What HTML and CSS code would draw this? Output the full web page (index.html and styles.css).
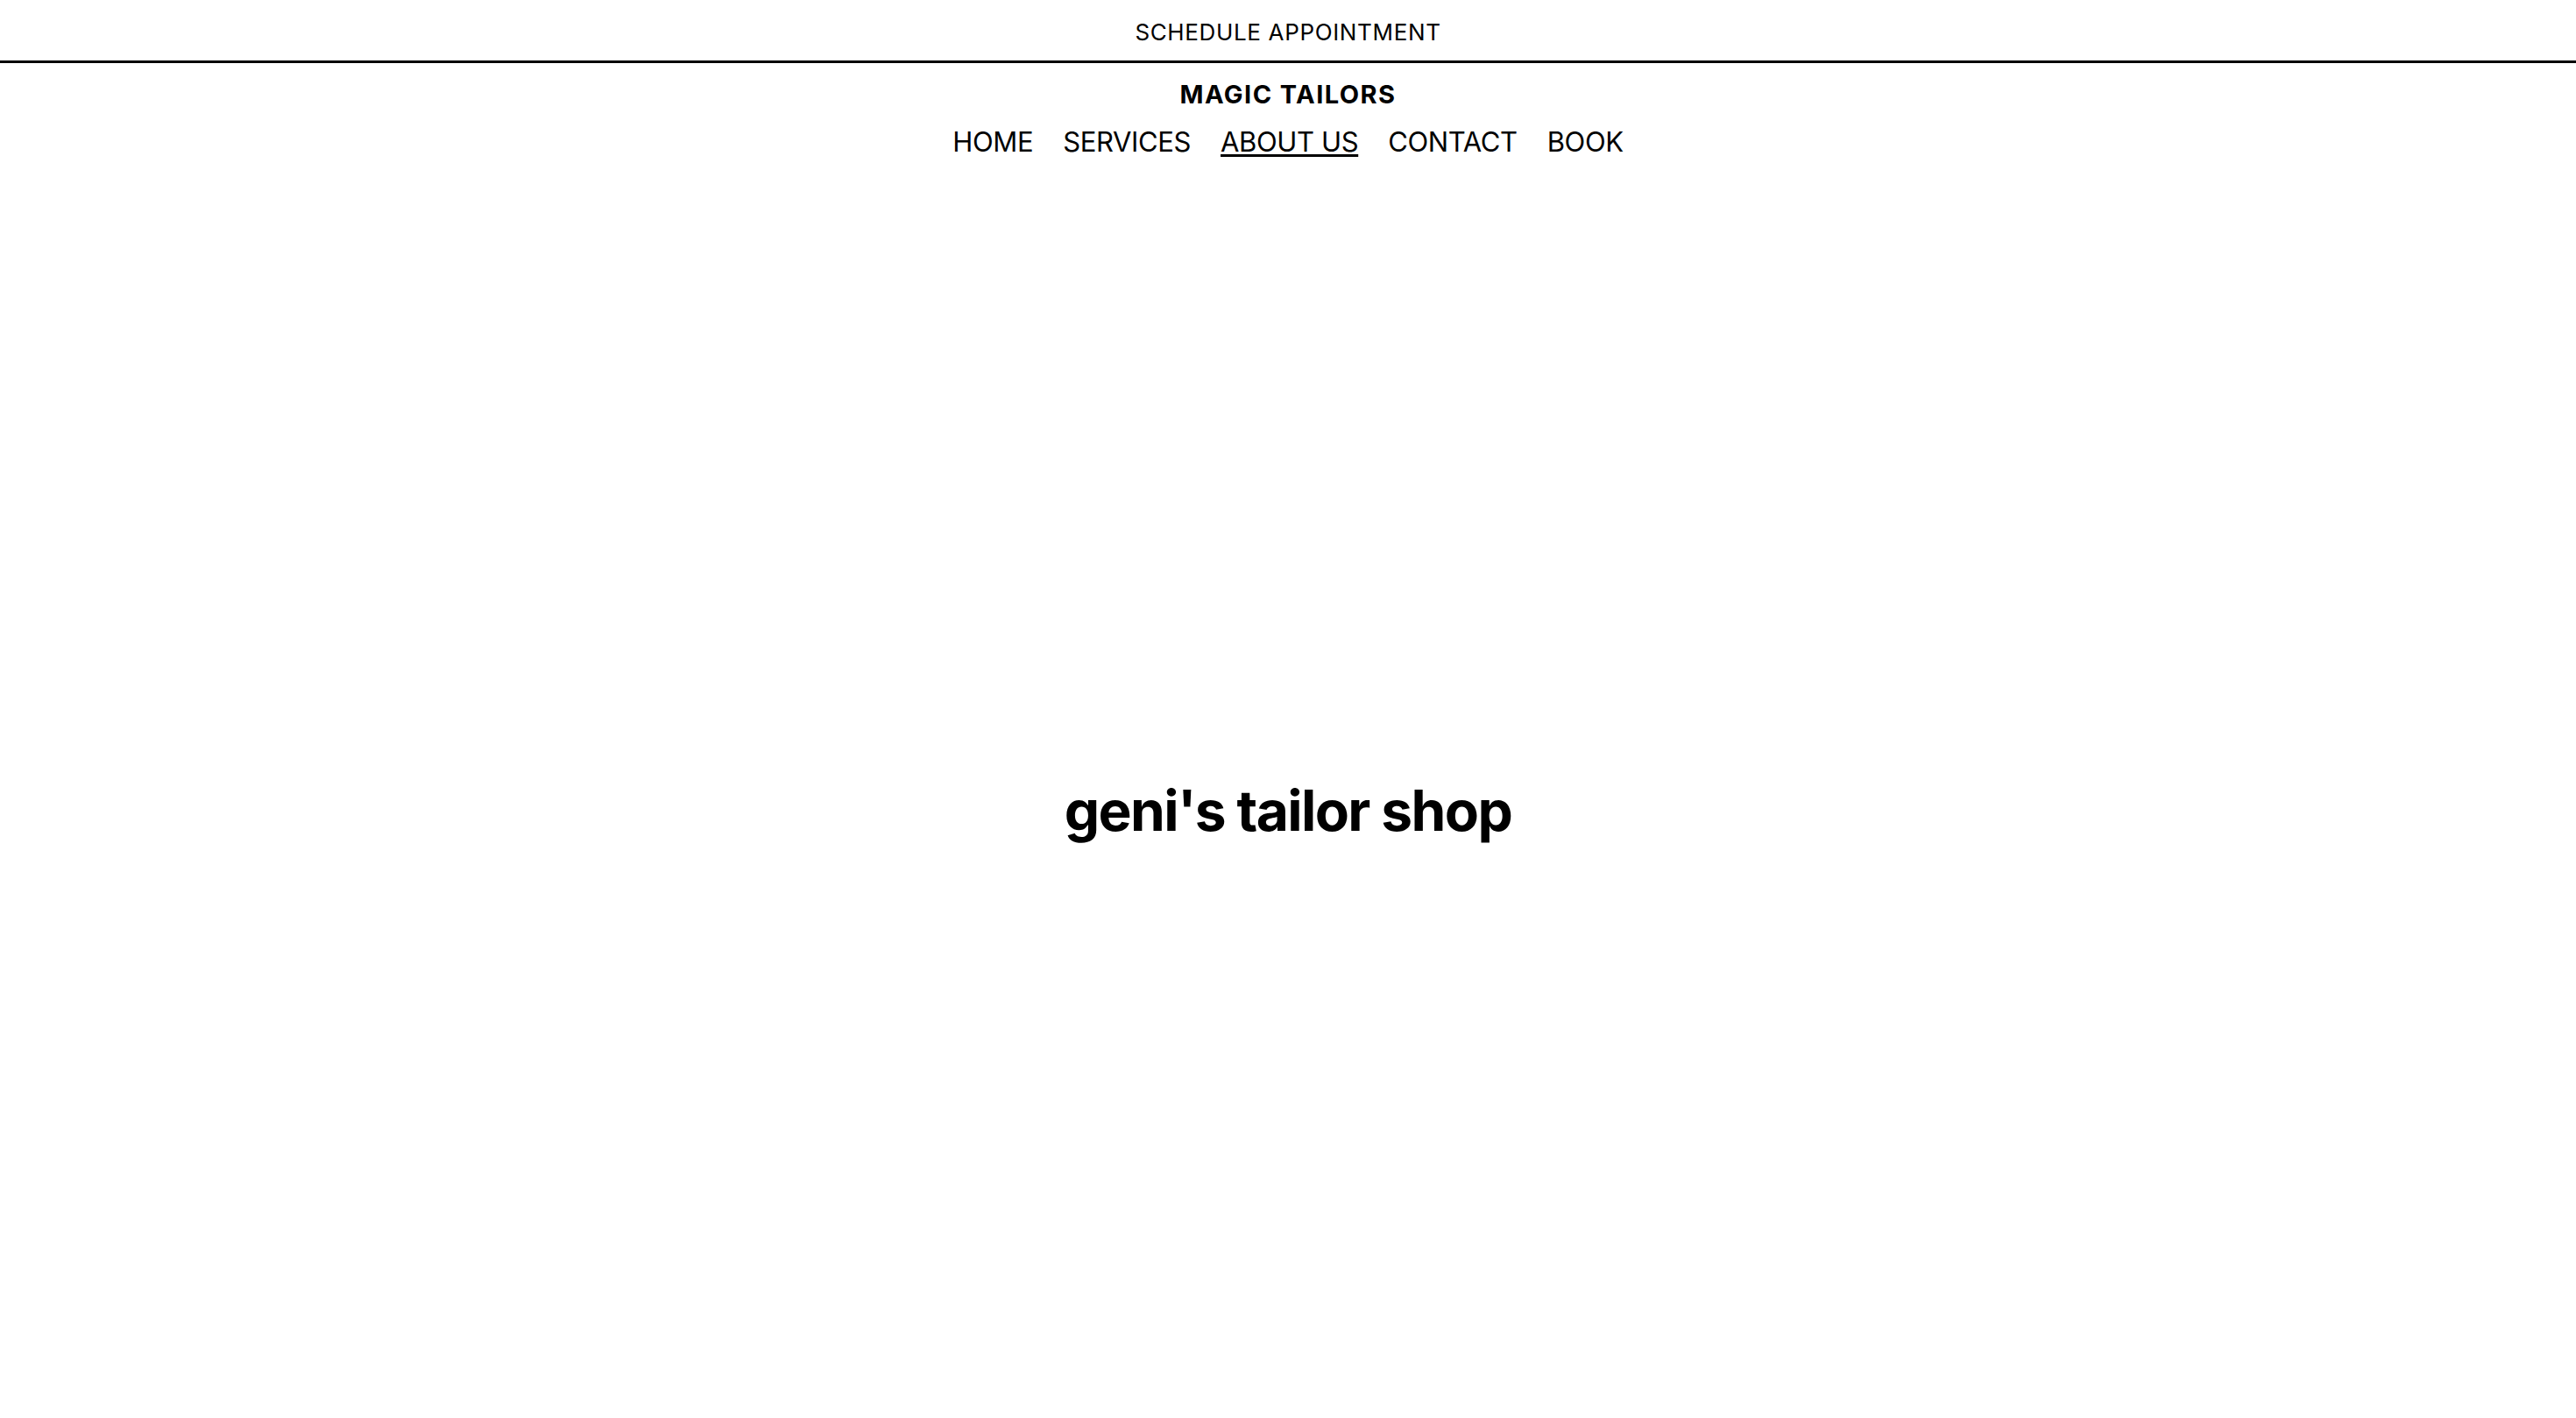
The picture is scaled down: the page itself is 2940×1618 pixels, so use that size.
FILE: index.html
```html
<!DOCTYPE html>
<html lang="en">
<head>
<meta charset="utf-8">
<title>Magic Tailors</title>
<link rel="stylesheet" href="styles.css">
</head>
<body>
<div class="topbar">
  <a class="schedule" href="#">SCHEDULE APPOINTMENT</a>
</div>
<header class="header">
  <div class="brand">MAGIC TAILORS</div>
  <nav class="nav">
    <a href="#">HOME</a>
    <a href="#">SERVICES</a>
    <a href="#" class="active">ABOUT US</a>
    <a href="#">CONTACT</a>
    <a href="#">BOOK</a>
  </nav>
</header>
<main class="hero">
  <h1 class="title">geni's tailor shop</h1>
</main>
</body>
</html>
```
FILE: styles.css
```css
* { box-sizing: border-box; }
html, body { margin: 0; padding: 0; background: #fff; }
body {
  font-family: Inter, "Noto Sans", "Liberation Sans", sans-serif;
  color: #000;
}
a { color: #000; text-decoration: none; }
.topbar {
  height: 72px;
  padding-top: 21px;
  border-bottom: 3px solid #000;
  display: flex;
  justify-content: center;
}
.schedule {
  font-size: 26px;
  line-height: 32px;
  letter-spacing: 0.025em;
}
.header {
  display: flex;
  flex-direction: column;
  align-items: center;
  padding-top: 18px;
}
.brand {
  font-size: 29px;
  font-weight: 700;
  line-height: 36px;
  letter-spacing: 0.05em;
}
.nav {
  display: flex;
  gap: 34px;
  margin-top: 17px;
}
.nav a {
  font-size: 31px;
  line-height: 38px;
  letter-spacing: -0.012em;
}
.nav a.active {
  text-decoration: underline;
  text-decoration-thickness: 3px;
  text-underline-offset: 3px;
}
.hero {
  display: flex;
  justify-content: center;
  padding-top: 705px;
  padding-bottom: 40px;
}
.title {
  margin: 0;
  font-size: 64px;
  font-weight: 700;
  line-height: 78px;
  letter-spacing: -0.025em;
}
```
